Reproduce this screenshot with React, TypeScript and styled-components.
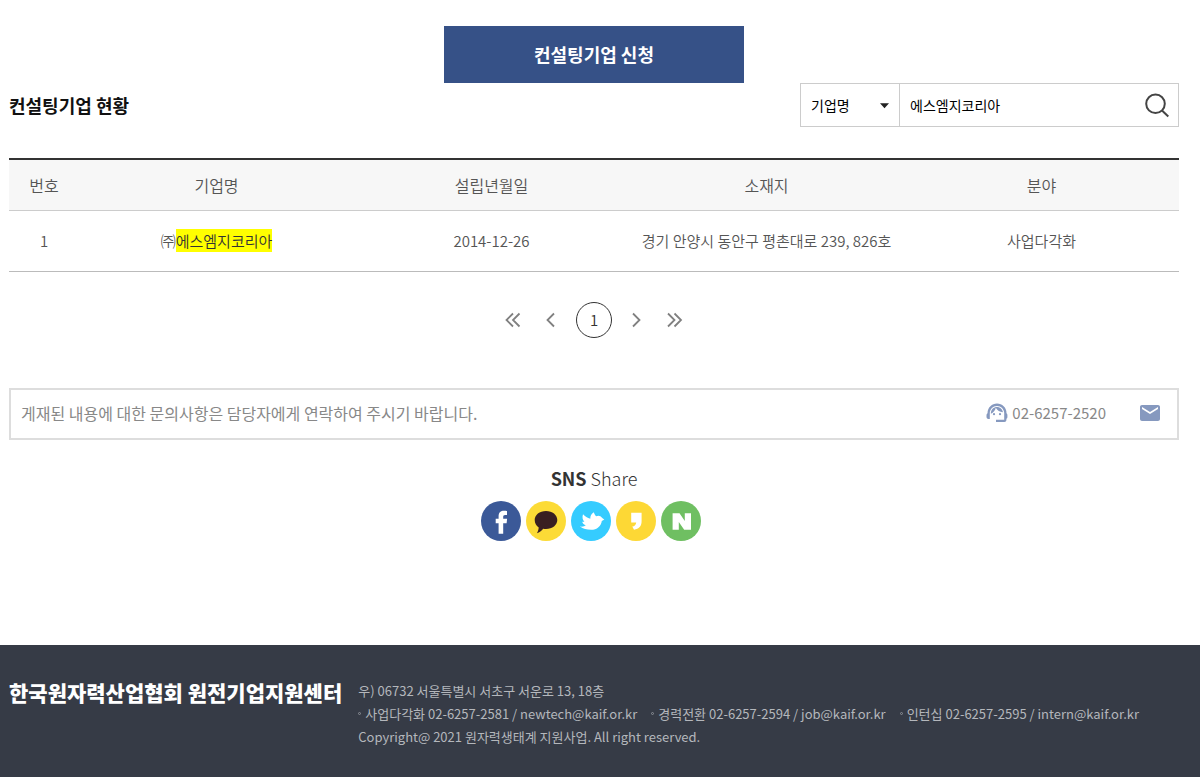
import React from 'react';
import styled, { createGlobalStyle } from 'styled-components';

const GlobalStyle = createGlobalStyle`
  *, *::before, *::after { box-sizing: border-box; }
  body {
    margin: 0;
    background: #fff;
    color: #555;
    font-family: "Noto Sans CJK KR", "Noto Sans", sans-serif;
    font-size: 15px;
    line-height: 24px;
  }
  a { color: inherit; text-decoration: none; }
  button, input, select { font: inherit; color: inherit; }
  #root { display: flex; flex-direction: column; min-height: 100vh; }
`;

const Main = styled.main`
  display: flex;
  flex-direction: column;
  padding: 26px 21px 104px 9px;
`;

const ApplyButton = styled.button`
  align-self: center;
  width: 300px;
  height: 57px;
  padding: 0 0 2px;
  border: 0;
  background: #365187;
  color: #fff;
  font-size: 18px;
  font-weight: 700;
  cursor: pointer;
`;

const ListHeader = styled.div`
  display: flex;
  align-items: center;
  justify-content: space-between;
  margin-bottom: 31px;
`;

const Title = styled.h2`
  margin: 0;
  color: #111;
  font-size: 18px;
  font-weight: 700;
`;

const SearchForm = styled.form`
  display: flex;
  height: 44px;
  border: 1px solid #ccc;
  color: #000;
  font-size: 14px;
`;

const SelectWrap = styled.div`
  position: relative;
  display: flex;
  width: 99px;
  border-right: 1px solid #ccc;
  svg { position: absolute; right: 10px; top: 19px; pointer-events: none; }
`;

const FieldSelect = styled.select`
  width: 100%;
  padding: 0 10px;
  border: 0;
  background: transparent;
  appearance: none;
`;

const Keyword = styled.input`
  width: 235px;
  padding: 0 10px;
  border: 0;
  background: transparent;
`;

const SearchButton = styled.button`
  display: flex;
  align-items: center;
  justify-content: center;
  width: 43px;
  padding: 0;
  border: 0;
  background: transparent;
  cursor: pointer;
`;

const Table = styled.table`
  width: 100%;
  border-collapse: separate;
  border-spacing: 0;
  table-layout: fixed;
  border-top: 2px solid #333;
  text-align: center;
`;

const HeadCell = styled.th<{ $narrow?: boolean }>`
  width: ${(p) => (p.$narrow ? '70px' : 'auto')};
  height: 51px;
  padding: 0;
  border-bottom: 1px solid #ccc;
  background: #f7f7f7;
  font-size: 16px;
  font-weight: 350;
`;

const Cell = styled.td`
  height: 61px;
  padding: 0;
  border-bottom: 1px solid #bbb;
  font-weight: 350;
`;

const Highlight = styled.mark`
  padding: 1px 0;
  background: #ff0;
  color: #333;
`;

const Pagination = styled.nav`
  display: flex;
  justify-content: center;
  gap: 2px;
  margin-top: 30px;
`;

const PageLink = styled.a<{ $current?: boolean }>`
  display: flex;
  align-items: center;
  justify-content: center;
  width: 36px;
  height: 36px;
  margin: 0 ${(p) => (p.$current ? '5px' : '0')};
  border: 1px solid ${(p) => (p.$current ? '#333' : 'transparent')};
  border-radius: 50%;
  color: #333;
  font-weight: 350;
`;

const Contact = styled.section`
  display: flex;
  align-items: center;
  height: 52px;
  margin-top: 50px;
  padding: 0 16px 2px 10px;
  border: 2px solid #ddd;
  color: #888;
`;

const ContactText = styled.p`
  flex: 1;
  margin: 0;
  font-size: 16px;
`;

const ContactLink = styled.a`
  display: flex;
  align-items: center;
  gap: 4px;
  margin-left: 33px;
`;

const Share = styled.section`
  display: flex;
  flex-direction: column;
  align-items: center;
  margin-top: 26px;
`;

const ShareTitle = styled.h3`
  margin: 0 0 11px;
  color: #333;
  font-size: 18px;
  font-weight: 300;
  b { font-weight: 700; }
`;

const ShareList = styled.ul`
  display: flex;
  gap: 5px;
  margin: 0;
  padding: 0 6px 0 0;
  list-style: none;
`;

const ShareLink = styled.a<{ $color: string }>`
  display: block;
  width: 40px;
  height: 40px;
  border-radius: 50%;
  background: ${(p) => p.$color};
  svg { display: block; }
`;

const Footer = styled.footer`
  display: flex;
  flex: 1;
  gap: 16px;
  padding: 34px 21px 28px 9px;
  background: #363b46;
`;

const FooterName = styled.strong`
  flex: none;
  color: #fff;
  font-size: 21px;
  font-weight: 900;
  line-height: 26px;
`;

const FooterInfo = styled.address`
  color: #b4b7bc;
  font-size: 13px;
  font-style: normal;
  line-height: 23px;
  p { margin: 0; }
`;

const ContactRow = styled.ul`
  display: flex;
  flex-wrap: wrap;
  gap: 0 14px;
  margin: 0;
  padding: 0;
  list-style: none;
`;

const ContactItem = styled.li`
  display: flex;
  align-items: center;
  gap: 4px;
  &::before {
    content: "";
    width: 3px;
    height: 3px;
    border: 1px solid #8b8f96;
    border-radius: 50%;
  }
`;

const Arrow = ({ d }: { d: string }) => (
  <svg width="18" height="18" viewBox="0 0 18 18" fill="none" stroke="#808080" strokeWidth="1.8" aria-hidden="true">
    <path d={d} />
  </svg>
);

const columns = ['번호', '기업명', '설립년월일', '소재지', '분야'];

const departments = [
  { name: '사업다각화', phone: '02-6257-2581', mail: 'newtech@kaif.or.kr' },
  { name: '경력전환', phone: '02-6257-2594', mail: 'job@kaif.or.kr' },
  { name: '인턴십', phone: '02-6257-2595', mail: 'intern@kaif.or.kr' },
];

const networks = [
  {
    name: 'Facebook',
    color: '#3b5998',
    icon: <path fill="#fff" d="M17.600 32.700V22.300H14.700V17.700h2.900v-2.500c0-3.800 2.200-5.500 5.400-5.500 1.400 0 2.500.1 3 .2v4.200h-1.900c-1.500 0-1.900.8-1.900 1.900v1.700h3.900l-.5 4.600h-3.400v10.400z" />,
  },
  {
    name: 'KakaoTalk',
    color: '#fcdb36',
    icon: <path fill="#391f21" d="M20 10c6.400 0 11.300 3.900 11.300 9s-4.900 9-11.300 9c-1 0-1.900-.1-2.800-.3-1.700 2.100-3.700 3.600-6.300 4.500 1-1.800 1.700-3.600 1.800-5.800-2.500-1.700-4-4.400-4-7.400 0-5.100 4.900-9 11.300-9z" />,
  },
  {
    name: 'Twitter',
    color: '#35ccff',
    icon: <path fill="#fff" d="M33.300 18.300c-.7.8-1.500 1.300-2.500 1.600-.6 5.200-4.800 8.800-10.800 8.800-4.200 0-8-1-11-3.200 2.500.4 4.400 0 5.800-1.200-1.800-.5-3.100-1.800-3.600-3.600.8.200 1.500.2 2.200 0-1.800-1.800-2.400-4.300-1.400-7.400 2.100 2.300 4.400 3.700 7.300 4.400-.1-2.800 1-5 3.600-6.400.4 1.800 1.200 3 2.300 3.900 2.200-1.100 4.600-.4 5.800 1.600.8.900 1.500 1.300 2.300 1.500z" />,
  },
  {
    name: 'KakaoStory',
    color: '#fdd835',
    icon: <path fill="#fff" d="M15.200 11.800h10.400v8.500c0 4.800-2.600 8-7.600 8.400l-1.700-3.100c2.300-.4 3.700-1.700 3.900-4.100h-5z" />,
  },
  {
    name: 'Naver',
    color: '#6fbf62',
    icon: <path fill="#fff" d="M11.600 12.300h6.900l5.300 7.700v-7.700H30v16.400h-6.800l-5.400-7.700v7.700h-6.200z" />,
  },
];

export default function App() {
  return (
    <>
      <GlobalStyle />
      <Main>
        <ApplyButton type="button">컨설팅기업 신청</ApplyButton>

        <ListHeader>
          <Title>컨설팅기업 현황</Title>
          <SearchForm role="search" onSubmit={(e) => e.preventDefault()}>
            <SelectWrap>
              <FieldSelect aria-label="검색 항목" defaultValue="name">
                <option value="name">기업명</option>
              </FieldSelect>
              <svg width="9" height="6" viewBox="0 0 9 6" aria-hidden="true">
                <path d="M0 .3h9L4.500 5.300z" fill="#222" />
              </svg>
            </SelectWrap>
            <Keyword type="text" aria-label="검색어" defaultValue="에스엠지코리아" />
            <SearchButton type="submit" aria-label="검색">
              <svg width="26" height="26" viewBox="0 0 26 26" fill="none" stroke="#444" strokeWidth="2" aria-hidden="true">
                <circle cx="11.500" cy="11.800" r="9.300" />
                <path d="M18 18.500l6.300 6" />
              </svg>
            </SearchButton>
          </SearchForm>
        </ListHeader>

        <Table>
          <thead>
            <tr>
              {columns.map((label, i) => (
                <HeadCell key={label} scope="col" $narrow={i === 0}>{label}</HeadCell>
              ))}
            </tr>
          </thead>
          <tbody>
            <tr>
              <Cell>1</Cell>
              <Cell>㈜<Highlight>에스엠지코리아</Highlight></Cell>
              <Cell>2014-12-26</Cell>
              <Cell>경기 안양시 동안구 평촌대로 239, 826호</Cell>
              <Cell>사업다각화</Cell>
            </tr>
          </tbody>
        </Table>

        <Pagination aria-label="페이지">
          <PageLink href="#first" aria-label="처음"><Arrow d="M9 2.500L2.500 9 9 15.500M15.500 2.500L9 9l6.500 6.500" /></PageLink>
          <PageLink href="#prev" aria-label="이전"><Arrow d="M12 2.500L5.500 9l6.500 6.500" /></PageLink>
          <PageLink href="#1" aria-current="page" $current>1</PageLink>
          <PageLink href="#next" aria-label="다음"><Arrow d="M5 2.500L11.500 9 5 15.500" /></PageLink>
          <PageLink href="#last" aria-label="마지막"><Arrow d="M2 2.500L8.500 9 2 15.500M8.500 2.500L15 9l-6.500 6.500" /></PageLink>
        </Pagination>

        <Contact>
          <ContactText>게재된 내용에 대한 문의사항은 담당자에게 연락하여 주시기 바랍니다.</ContactText>
          <ContactLink href="tel:02-6257-2520">
            <svg width="22" height="20" viewBox="1 2 22 20" fill="#8699bf" aria-hidden="true">
              <path d="M21.500 12.200C21.500 6.600 17 2.600 12 2.600S2.500 6.500 2.500 12.200c-.6.300-1 1-1 1.700v2.200c0 1.100.9 2 2 2h1.300v-6c0-4 3.200-7.200 7.200-7.200s7.200 3.200 7.200 7.200v6.700h-8.200V21h8.400c1.100 0 2-.9 2-2v-1.200c.6-.3 1-.9 1-1.600v-2.300c0-.8-.3-1.400-.9-1.700z" />
              <circle cx="9" cy="13.200" r="1.100" />
              <circle cx="15" cy="13.200" r="1.100" />
              <path d="M18 11.200c-.5-3.100-3-5.300-6-5.300-3.200 0-6.400 2.700-6.100 6.800 2.500-1 4.300-3.200 4.900-5.900 1.300 2.600 4.100 4.400 7.200 4.400z" />
            </svg>
            02-6257-2520
          </ContactLink>
          <ContactLink href="mailto:newtech@kaif.or.kr" aria-label="이메일">
            <svg width="22" height="18" viewBox="1 3 22 18" fill="#8699bf" aria-hidden="true">
              <path d="M20 4H4c-1.100 0-2 .9-2 2v12c0 1.100.9 2 2 2h16c1.100 0 2-.9 2-2V6c0-1.100-.9-2-2-2zm0 4l-8 5-8-5V6l8 5 8-5v2z" />
            </svg>
          </ContactLink>
        </Contact>

        <Share>
          <ShareTitle><b>SNS</b> Share</ShareTitle>
          <ShareList>
            {networks.map((n) => (
              <li key={n.name}>
                <ShareLink href={`#${n.name}`} aria-label={n.name} $color={n.color}>
                  <svg width="40" height="40" viewBox="0 0 40 40" aria-hidden="true">{n.icon}</svg>
                </ShareLink>
              </li>
            ))}
          </ShareList>
        </Share>
      </Main>

      <Footer>
        <FooterName>한국원자력산업협회 원전기업지원센터</FooterName>
        <FooterInfo>
          <p>우) 06732 서울특별시 서초구 서운로 13, 18층</p>
          <ContactRow>
            {departments.map((d) => (
              <ContactItem key={d.name}>{`${d.name} ${d.phone} / ${d.mail}`}</ContactItem>
            ))}
          </ContactRow>
          <p>Copyright@ 2021 원자력생태계 지원사업. All right reserved.</p>
        </FooterInfo>
      </Footer>
    </>
  );
}
